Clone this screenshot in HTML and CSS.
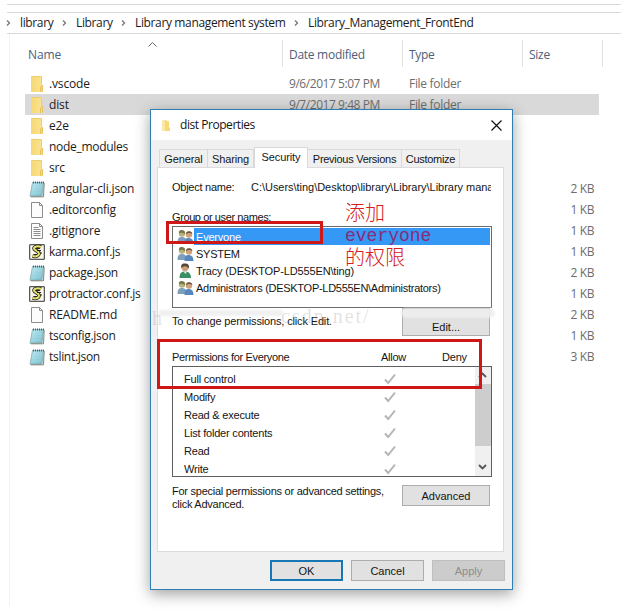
FILE: index.html
```html
<!DOCTYPE html>
<html lang="en">
<head>
<meta charset="utf-8">
<title>dist Properties</title>
<link rel="stylesheet" href="styles.css">
</head>
<body>
<svg class="defs" aria-hidden="true">
  <defs>
    <linearGradient id="gold" x1="0" x2="1"><stop offset="0" stop-color="#f6d873"/><stop offset="1" stop-color="#fbe495"/></linearGradient>
    <linearGradient id="aqua" x1="0" x2="1" y2="1"><stop offset="0" stop-color="#c5edf3"/><stop offset="1" stop-color="#6fb9c9"/></linearGradient>
    <symbol id="folder" viewBox="0 0 16 18"><path d="M2 1h11v9l1 1v6H2z" fill="url(#gold)"/><path d="M2.500 1.500h10v8" fill="none" stroke="#ecce70"/><path d="M11.500 17v-5l2-2v6.500" fill="#f6d873" stroke="#e3be58" stroke-width=".8"/></symbol>
    <symbol id="notepad" viewBox="0 0 16 18"><path d="M3.500 2.500h11L13 16l-12 .3z" fill="url(#aqua)" stroke="#82aab1" stroke-width=".8"/><path d="M15.200 3 14.500 16.800H2" fill="none" stroke="#77736a" stroke-width=".9"/><path d="M4 2.500h11" stroke="#4b6268" stroke-width="2" stroke-dasharray="1 1"/><path d="M4 7h9M3.500 10h9M3 13h9" stroke="#a6dbe4" stroke-width=".7"/></symbol>
    <symbol id="blank" viewBox="0 0 16 18"><path d="M2.500 1.500h8l3 3v12h-11z" fill="#fcfcfc" stroke="#8c8c8c"/><path d="M10.500 1.500v3h3" fill="none" stroke="#8c8c8c"/></symbol>
    <symbol id="lines" viewBox="0 0 16 18"><path d="M2.500 1.500h8l3 3v12h-11z" fill="#fcfcfc" stroke="#8c8c8c"/><path d="M10.500 1.500v3h3M4.500 5.500h5M4.500 7.500h7M4.500 9.500h7M4.500 11.500h7M4.500 13.500h7" fill="none" stroke="#8c8c8c"/></symbol>
    <symbol id="script" viewBox="0 0 16 18"><path d="M.7 1.700h14.600v14.600H.7z" fill="#f7f6e8" stroke="#333"/><path d="M12 4C9 2.500 5 3.500 5 5.500S10 8 10 10.500 7 14 3.500 13" fill="none" stroke="#222" stroke-width="3.600"/><path d="M12 4C9 2.500 5 3.500 5 5.500S10 8 10 10.500 7 14 3.500 13" fill="none" stroke="#e4e26b" stroke-width="2"/><path d="M7 5.500h4M8 7.500h4M11 10h2M5 11.500h3" stroke="#222"/></symbol>
    <symbol id="group" viewBox="0 0 17 16"><circle cx="5" cy="4.500" r="3.200" fill="#b9b27d"/><path d="M2 4.500C1.500 1 4 .5 5.500 1.200 8 1.500 8 3 8 5 6 4 4 3 2 4.500" fill="#77764a"/><path d="M.5 14C.5 9 2 8 5 8s5 2 5 6z" fill="#7ca0bd"/><circle cx="12" cy="5.500" r="3.200" fill="#d0a27c"/><path d="M9 5.500c-.5-4 6-4.500 6.300-.5C14 4 11 3 9 5.500" fill="#675340"/><path d="M7.500 15c0-5 1.500-6 4.500-6s4.500 2 4.500 6z" fill="#5788bd"/></symbol>
    <symbol id="person" viewBox="0 0 17 16"><circle cx="8" cy="4.500" r="3.600" fill="#cba077"/><path d="M4.300 5C3.500 0 7 .5 9 .5c3 .5 3.500 3 2.500 5C11 3 7 2 4.300 5" fill="#534937"/><path d="M2.500 15c0-5 2-6.500 5.500-6.500s6 2 6 6.500z" fill="#3c8f63"/><path d="m6.500 8.500 2 2.500 1.500-2.500z" fill="#e3eee7"/></symbol>
    <symbol id="check" viewBox="0 0 12 12"><path d="M1 6.500 4.200 10 11 1.500" fill="none" stroke="#b5b5b5" stroke-width="2"/></symbol>
    <symbol id="sep" viewBox="0 0 5 8"><path d="m1 1.500 2.500 2.500L1 6.500" fill="none" stroke="#777" stroke-width="1.300"/></symbol>
  </defs>
</svg>
<main class="explorer">
  <nav class="path">
    <svg class="sep"><use href="#sep"/></svg><span class="p1">library</span>
    <svg class="sep"><use href="#sep"/></svg><span class="p2">Library</span>
    <svg class="sep"><use href="#sep"/></svg><span class="p3">Library management system</span>
    <svg class="sep"><use href="#sep"/></svg><span class="p4">Library_Management_FrontEnd</span>
  </nav>
  <section class="files">
    <header class="cols"><span>Name<svg class="sort" viewBox="0 0 9 5"><path d="m.5 4.500 4-4 4 4" fill="none" stroke="#666"/></svg></span><span>Date modified</span><span>Type</span><span>Size</span></header>
    <div class="row"><svg class="ico"><use href="#folder"/></svg><b>.vscode</b><i>9/6/2017 5:07 PM</i><i>File folder</i></div>
    <div class="row picked"><svg class="ico"><use href="#folder"/></svg><b>dist</b><i>9/7/2017 9:48 PM</i><i>File folder</i></div>
    <div class="row"><svg class="ico"><use href="#folder"/></svg><b>e2e</b></div>
    <div class="row"><svg class="ico"><use href="#folder"/></svg><b class="tight">node_modules</b></div>
    <div class="row"><svg class="ico"><use href="#folder"/></svg><b>src</b></div>
    <div class="row"><svg class="ico"><use href="#notepad"/></svg><b>.angular-cli.json</b><em>2 KB</em></div>
    <div class="row"><svg class="ico"><use href="#blank"/></svg><b class="tight">.editorconfig</b><em>1 KB</em></div>
    <div class="row"><svg class="ico"><use href="#lines"/></svg><b>.gitignore</b><em>1 KB</em></div>
    <div class="row"><svg class="ico"><use href="#script"/></svg><b class="tight">karma.conf.js</b><em>1 KB</em></div>
    <div class="row"><svg class="ico"><use href="#notepad"/></svg><b class="tight">package.json</b><em>2 KB</em></div>
    <div class="row"><svg class="ico"><use href="#script"/></svg><b class="tight">protractor.conf.js</b><em>1 KB</em></div>
    <div class="row"><svg class="ico"><use href="#blank"/></svg><b>README.md</b><em>2 KB</em></div>
    <div class="row"><svg class="ico"><use href="#notepad"/></svg><b class="tight">tsconfig.json</b><em>1 KB</em></div>
    <div class="row"><svg class="ico"><use href="#notepad"/></svg><b class="tight">tslint.json</b><em>3 KB</em></div>
  </section>
</main>

<section class="dialog">
  <header class="title"><svg class="tico" viewBox="0 0 10 13"><path d="M1 1h4l1 1h2v6l1 1v3H1z" fill="#f8d977"/><path d="M1 1h3v11H1z" fill="#fbe7a6"/></svg><span>dist Properties</span><svg class="close" viewBox="0 0 11 11"><path d="m.5.5 10 10m0-10-10 10" stroke="#111" stroke-width="1.200"/></svg></header>
  <div class="tabs"><span class="t1">General</span><span class="t2">Sharing</span><span class="t3 on">Security</span><span class="t4">Previous Versions</span><span class="t5">Customize</span></div>
  <div class="panel">
    <div class="object"><span class="olabel">Object name:</span><span class="opath">C:\Users\ting\Desktop\library\Library\Library mana</span></div>
    <div class="glabel"><span>Group or user names:</span></div>
    <div class="users">
      <div class="user sel"><svg class="uico"><use href="#group"/></svg><span class="u1">Everyone</span></div>
      <div class="user"><svg class="uico"><use href="#group"/></svg><span class="u2">SYSTEM</span></div>
      <div class="user"><svg class="uico"><use href="#person"/></svg><span class="u3">Tracy (DESKTOP-LD555EN\ting)</span></div>
      <div class="user"><svg class="uico"><use href="#group"/></svg><span class="u4">Administrators (DESKTOP-LD555EN\Administrators)</span></div>
    </div>
    <div class="change"><span class="clabel">To change permissions, click Edit.</span><span class="btn edit">Edit...</span></div>
    <div class="phead"><span class="plabel">Permissions for Everyone</span><span class="allow">Allow</span><span class="deny">Deny</span></div>
    <div class="perms">
      <div class="plist">
        <div><span>Full control</span><svg><use href="#check"/></svg></div>
        <div><span>Modify</span><svg><use href="#check"/></svg></div>
        <div><span>Read &amp; execute</span><svg><use href="#check"/></svg></div>
        <div><span>List folder contents</span><svg><use href="#check"/></svg></div>
        <div><span>Read</span><svg><use href="#check"/></svg></div>
        <div><span>Write</span><svg><use href="#check"/></svg></div>
      </div>
      <div class="scroll"><svg viewBox="0 0 15 17"><path d="m4 10 3.500-3.500L11 10" fill="none" stroke="#555" stroke-width="1.800"/></svg><div class="thumb"></div><svg viewBox="0 0 15 17"><path d="m4 6 3.500 3.500L11 6" fill="none" stroke="#555" stroke-width="1.800"/></svg></div>
    </div>
    <div class="special"><p>For special permissions or advanced settings,<br>click Advanced.</p><span class="btn">Advanced</span></div>
  </div>
  <footer class="foot"><span class="btn ok">OK</span><span class="btn">Cancel</span><span class="btn off">Apply</span></footer>
</section>
<div class="haze left"></div><div class="haze right"></div>
<div class="mark m1">h</div><div class="mark m2">csdn.net/</div>
<div class="frame one"></div><div class="frame two"></div>
<div class="note">添加<br><span>everyone</span><br>的权限</div>
</body>
</html>
```
FILE: styles.css
```css
* { box-sizing: border-box; }
body { margin: 0; width: 643px; height: 614px; overflow: hidden; background: #fff; font: 12px/16px "Open Sans", sans-serif; color: #1b1b1b; }
.defs { position: absolute; width: 0; height: 0; }
.explorer { width: 614px; height: 606px; margin: 4px 0 0 7px; border-top: 1px solid #d9d9d9; }
.path { height: 22px; margin-top: 7px; border: solid #d9d9d9; border-width: 1px 0; display: flex; align-items: center; white-space: nowrap; }
.sep { width: 5px; height: 8px; flex: none; }
.path span { letter-spacing: -.36px; }
.p1 { width: 42px; margin-left: 9px; }
.p2 { width: 45px; margin-left: 9px; }
.p3 { width: 159px; margin-left: 9px; }
.p4 { margin-left: 9px; }
.path .sep:first-child { margin-left: -1px; }
.files { margin-left: 2px; height: 572px; border-left: 1px solid #f2f2f2; }
.cols { display: grid; grid-template-columns: 273px 120px 120px 80px; height: 33px; padding-top: 6px; margin-bottom: 6px; color: #4c607a; }
.cols span { height: 27px; padding: 7px 0 0 6px; border-right: 1px solid #e2e2e2; position: relative; letter-spacing: -.28px; }
.cols span:first-child { padding-left: 18px; letter-spacing: -.1px; }
.sort { position: absolute; left: 138px; top: 2px; width: 9px; height: 5px; }
.row { display: grid; grid-template-columns: 20px 240px 120px 120px 1fr; align-items: center; width: 574px; height: 21px; margin-left: 15px; padding-left: 4px; }
.row.picked { background: #d9d9d9; }
.row b { font-weight: 400; letter-spacing: -.15px; }
.row .tight { letter-spacing: -.3px; }
.row i { font-style: normal; color: #6d6d6d; letter-spacing: -.45px; }
.row i + i { letter-spacing: -.3px; }
.row em { grid-column: 5; justify-self: end; margin-right: 5px; font-style: normal; color: #6d6d6d; letter-spacing: -.4px; }
.ico { width: 16px; height: 18px; }
.dialog { position: absolute; left: 150px; top: 109px; width: 363px; height: 481px; border: 1px solid #2f7eb3; background: #f0f0f0; box-shadow: 0 4px 14px rgba(0,0,0,.38); font: 11px/14px "Liberation Sans", sans-serif; color: #151515; display: flex; flex-direction: column; white-space: nowrap; }
.title { height: 30px; background: #fff; display: flex; align-items: center; padding: 0 10px; font: 12px/16px "Open Sans", sans-serif; }
.tico { width: 10px; height: 13px; margin-right: 9px; }
.title span { flex: 1; letter-spacing: -.45px; }
.close { width: 11px; height: 11px; }
.tabs { height: 27px; padding-left: 8px; display: flex; align-items: flex-end; }
.tabs span { height: 18px; border: 1px solid #d9d9d9; border-bottom: 0; text-align: center; line-height: 18px; letter-spacing: -.1px; }
.tabs span + span { border-left: 0; }
.t1 { width: 49px; } .t2 { width: 46px; } .t3 { width: 54px; } .t4 { width: 94px; } .t5 { width: 58px; }
.tabs .t4 { letter-spacing: -.28px; }
.tabs .t5 { letter-spacing: -.3px; }
.tabs .on { background: #fff; height: 21px; margin-bottom: -1px; position: relative; border-left: 1px solid #d9d9d9; }
.panel { width: 347px; height: 385px; margin-left: 6px; background: #fff; border: 1px solid #dcdcdc; padding: 12px 11px 0 14px; }
.object { display: flex; height: 14px; }
.olabel { width: 79px; letter-spacing: -.25px; }
.opath { width: 240px; overflow: hidden; letter-spacing: -.03px; }
.glabel { margin-top: 16px; height: 14px; letter-spacing: -.4px; }
.users { width: 320px; height: 82px; margin-top: 2px; border: 1px solid #6b6b6b; padding: 1px 1px 0 2px; }
.user { height: 17px; display: flex; align-items: center; padding-left: 2px; }
.uico { width: 17px; height: 16px; margin-right: 2px; }
.u1 { letter-spacing: -.2px; }
.u2 { letter-spacing: -.25px; }
.u3 { letter-spacing: -.14px; }
.u4 { letter-spacing: -.28px; }
.sel { background: linear-gradient(90deg, #fff 19px, #3598f5 19px); color: #fff; }
.btn { display: flex; align-items: center; justify-content: center; background: #e1e1e1; border: 1px solid #adadad; width: 88px; height: 21px; }
.change { display: flex; height: 28px; }
.clabel { width: 230px; padding-top: 6px; letter-spacing: -.15px; }
.edit { height: 28px; padding-top: 9px; }
.phead { height: 30px; padding-top: 14px; display: grid; grid-template-columns: 209px 61px 1fr; }
.plabel { letter-spacing: -.33px; }
.allow { letter-spacing: -.25px; }
.deny { letter-spacing: -.2px; }
.perms { width: 320px; height: 111px; border: 1px solid #5f5f5f; display: flex; overflow: hidden; }
.plist { flex: 1; padding-top: 3px; letter-spacing: -.2px; }
.plist div { height: 18px; padding-left: 11px; display: grid; grid-template-columns: 200px 12px; align-items: center; }
.plist svg { width: 12px; height: 12px; }
.scroll { width: 16px; background: #f0f0f0; display: flex; flex-direction: column; }
.scroll svg { width: 15px; height: 17px; flex: none; }
.thumb { height: 62px; background: #cdcdcd; margin-bottom: 13px; }
.special { display: flex; justify-content: space-between; width: 318px; margin-top: 8px; }
.special p { margin: 0; line-height: 13px; letter-spacing: -.25px; }
.foot { display: flex; gap: 8px; margin: 8px 0 0 119px; }
.foot .btn { width: 73px; }
.foot .ok { border: 2px solid #1777b5; }
.foot .off { background: #ccc; border-color: #bfbfbf; color: #8d8d8d; }
.haze { position: absolute; background: rgba(238,238,238,.9); border-radius: 5px; filter: blur(1px); }
.left { left: 158px; top: 310px; width: 125px; height: 6px; }
.right { left: 401px; top: 308px; width: 94px; height: 10px; }
.mark { position: absolute; font: 20px/20px "Liberation Serif", serif; color: rgba(150,150,150,.28); }
.m1 { left: 152px; top: 308px; } .m2 { left: 281px; top: 306px; letter-spacing: 2px; }
.frame { position: absolute; border: 3px solid #cf1717; }
.one { left: 166px; top: 221px; width: 157px; height: 23px; }
.two { left: 157px; top: 339px; width: 325px; height: 50px; }
.note { position: absolute; left: 345px; top: 201px; font: 20px/21px "Noto Sans CJK SC", sans-serif; font-weight: 300; color: #d42020; white-space: nowrap; }
.note span { font: 18px/20px "Liberation Mono", monospace; color: #8a2c78; }
```
